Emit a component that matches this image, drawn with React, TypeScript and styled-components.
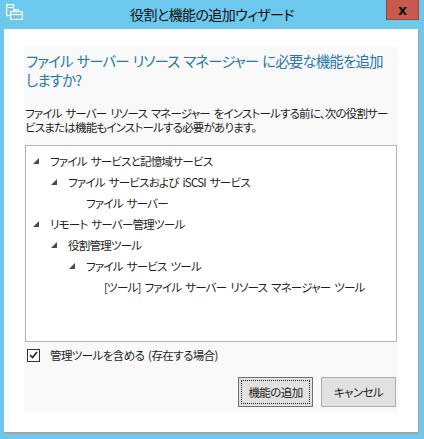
import styled, { createGlobalStyle } from 'styled-components'

const GlobalStyle = createGlobalStyle`
  body {
    margin: 0;
    font-family: "Noto Sans CJK JP", "Noto Sans", sans-serif;
    font-feature-settings: "palt";
    word-spacing: 2px;
    color: #1e1e1e;
  }
`

const Window = styled.div`
  width: 424px;
  height: 439px;
  background: #6cc8ec;
  display: flex;
  flex-direction: column;
  overflow: hidden;
`

const TitleBar = styled.div`
  height: 29px;
  flex-shrink: 0;
  display: grid;
  grid-template-columns: 1fr auto 1fr;
  align-items: start;
`

const AppIcon = styled.div`
  padding: 4px 0 0 6px;
  line-height: 0;
`

const Title = styled.div`
  padding-top: 5px;
  font-size: 14px;
  line-height: 18px;
  letter-spacing: -0.6px;
  color: #111;
`

const CloseButton = styled.div`
  justify-self: end;
  margin-right: 5px;
  width: 33px;
  height: 20px;
  box-sizing: border-box;
  background: #c75a4c;
  border: 1px solid #a34436;
  border-top: none;
  display: flex;
  align-items: center;
  justify-content: center;
  font: bold 14px "DejaVu Sans", sans-serif;
  color: #111;
`

const Client = styled.div`
  flex: 1;
  min-width: 0;
  margin: 0 5px 5px 4px;
  background: #fff;
  border-right: 1px solid #a0a8ac;
  border-bottom: 2px solid #a4a4a4;
  padding: 18px 20px 19px 20px;
  display: flex;
`

const Panel = styled.div`
  flex: 1;
  min-width: 0;
  background: #f9f9f9;
  padding: 0 1px;
  display: flex;
  flex-direction: column;
`

const Heading = styled.div`
  margin-top: 4px;
  padding-left: 1px;
  font-size: 14.5px;
  line-height: 19px;
  letter-spacing: -0.9px;
  word-spacing: 1.5px;
  color: #2677ad;
  white-space: nowrap;
`

const Description = styled.div`
  margin-top: 17px;
  font-size: 11.5px;
  line-height: 14px;
  letter-spacing: -0.8px;
  white-space: nowrap;
`

const TreeBox = styled.div`
  margin-top: 11px;
  height: 197px;
  box-sizing: border-box;
  border: 1px solid #b4b4b4;
  background: #fff;
  padding-top: 4px;
`

const TreeRow = styled.div<{ $level: number }>`
  height: 21px;
  display: flex;
  align-items: center;
  padding-left: ${(p) => 7 + p.$level * 18}px;
  font-size: 11.5px;
  letter-spacing: -0.75px;
  white-space: nowrap;
`

const Toggle = styled.span`
  width: 6px;
  height: 6px;
  margin-right: 11px;
  line-height: 0;
  flex-shrink: 0;
`

const CheckRow = styled.label`
  margin-top: 5px;
  height: 16px;
  display: flex;
  align-items: center;
  gap: 10px;
  padding-left: 2px;
  font-size: 11.5px;
  letter-spacing: -0.6px;
`

const CheckBox = styled.span`
  width: 13px;
  height: 13px;
  box-sizing: border-box;
  border: 1px solid #333;
  background: #fff;
  display: flex;
  align-items: center;
  justify-content: center;
`

const ButtonRow = styled.div`
  margin-top: 14px;
  display: flex;
  justify-content: flex-end;
  gap: 8px;
  padding-right: 1px;
`

const Button = styled.button<{ $focused?: boolean }>`
  width: 75px;
  height: 30px;
  background: #e1e1e1;
  border: 1px solid ${(p) => (p.$focused ? '#707070' : '#adadad')};
  font-family: inherit;
  font-feature-settings: "palt";
  font-size: 11.5px;
  letter-spacing: -0.6px;
  color: #222;
  padding: 0;
  outline: ${(p) => (p.$focused ? '1px dotted #222' : 'none')};
  outline-offset: -4px;
`

const tree = [
  { level: 0, open: true, label: 'ファイル サービスと記憶域サービス' },
  { level: 1, open: true, label: 'ファイル サービスおよび iSCSI サービス' },
  { level: 2, open: false, label: 'ファイル サーバー' },
  { level: 0, open: true, label: 'リモート サーバー管理ツール' },
  { level: 1, open: true, label: '役割管理ツール' },
  { level: 2, open: true, label: 'ファイル サービス ツール' },
  { level: 3, open: false, label: '[ツール] ファイル サーバー リソース マネージャー ツール' },
]

const ServerIcon = () => (
  <svg width="17" height="16" viewBox="0 0 17 16" fill="none" stroke="#fff" strokeWidth="1.2">
    <rect x="0.6" y="0.6" width="7" height="11" fill="#6cc8ec" />
    <line x1="1.5" y1="3.5" x2="6.5" y2="3.5" />
    <rect x="4.6" y="7.6" width="11.8" height="7.8" fill="#6cc8ec" />
    <path d="M8.5 7.6V5.8h4v1.8" />
    <line x1="4.6" y1="10.5" x2="16.4" y2="10.5" />
  </svg>
)

const Arrow = () => (
  <svg width="6" height="6" viewBox="0 0 6 6">
    <polygon points="6,0 6,6 0,6" fill="#4a4a4a" />
  </svg>
)

export default function App() {
  return (
    <>
      <GlobalStyle />
      <Window>
        <TitleBar>
          <AppIcon>
            <ServerIcon />
          </AppIcon>
          <Title>役割と機能の追加ウィザード</Title>
          <CloseButton>x</CloseButton>
        </TitleBar>
        <Client>
          <Panel>
            <Heading>
              ファイル サーバー リソース マネージャー に必要な機能を追加
              <br />
              しますか?
            </Heading>
            <Description>
              ファイル サーバー リソース マネージャー をインストールする前に、次の役割サー
              <br />
              ビスまたは機能もインストールする必要があります。
            </Description>
            <TreeBox>
              {tree.map((item) => (
                <TreeRow key={item.label} $level={item.level}>
                  <Toggle>{item.open && <Arrow />}</Toggle>
                  {item.label}
                </TreeRow>
              ))}
            </TreeBox>
            <CheckRow>
              <CheckBox>
                <svg width="9" height="8" viewBox="0 0 9 8">
                  <path d="M1 4l2.5 2.5L8 1" fill="none" stroke="#222" strokeWidth="1.6" />
                </svg>
              </CheckBox>
              管理ツールを含める (存在する場合)
            </CheckRow>
            <ButtonRow>
              <Button $focused>機能の追加</Button>
              <Button>キャンセル</Button>
            </ButtonRow>
          </Panel>
        </Client>
      </Window>
    </>
  )
}
